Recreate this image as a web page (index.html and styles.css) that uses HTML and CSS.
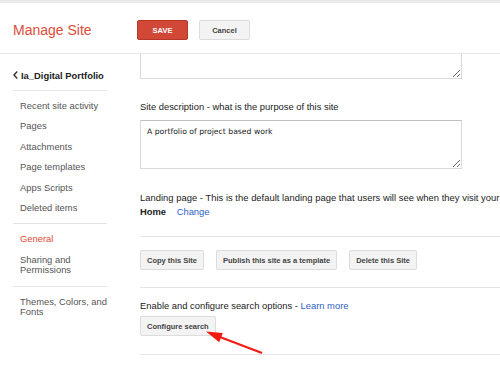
FILE: index.html
```html
<!DOCTYPE html>
<html lang="en">

<head>
    <meta charset="utf-8">
    <link rel="stylesheet" href="styles.css">
</head>

<body>
    <div class="top-strip"></div>
    <header class="header">
        <div class="page-title">Manage Site</div>
        <div class="header-actions">
            <button class="btn btn-red">SAVE</button>
            <button class="btn btn-cancel">Cancel</button>
        </div>
    </header>

    <div class="layout">
        <nav class="sidebar">
            <div class="site-name">
                <svg class="chevron" width="5" height="8" viewBox="0 0 5 8">
                    <polyline points="4.2,0.6 1,4 4.2,7.4" fill="none" stroke="#333" stroke-width="1.4" />
                </svg>
                Ia_Digital Portfolio
            </div>
            <ul class="nav-group">
                <li>Recent site activity</li>
                <li>Pages</li>
                <li>Attachments</li>
                <li>Page templates</li>
                <li>Apps Scripts</li>
                <li>Deleted items</li>
            </ul>
            <ul class="nav-group">
                <li class="active">General</li>
                <li>Sharing and<br>Permissions</li>
            </ul>
            <ul class="nav-group last">
                <li>Themes, Colors, and<br>Fonts</li>
            </ul>
        </nav>

        <main class="content">
            <section class="block">
                <textarea class="field field-cut" readonly></textarea>
                <div class="label desc-label">Site description - what is the purpose of this site</div>
                <textarea class="field field-desc" readonly>A portfolio of project based work</textarea>
                <div class="label landing-label">Landing page - This is the default landing page that users will see when they visit your site</div>
                <div class="label"><strong>Home</strong> <a class="link change-link">Change</a></div>
            </section>

            <section class="block actions">
                <button class="btn">Copy this Site</button>
                <button class="btn">Publish this site as a template</button>
                <button class="btn">Delete this Site</button>
            </section>

            <section class="block search">
                <div class="label">Enable and configure search options - <a class="link">Learn more</a></div>
                <button class="btn search-btn">Configure search</button>
            </section>
        </main>
    </div>

    <svg class="annotation" width="70" height="35" viewBox="0 0 70 35">
        <line x1="62" y1="28" x2="16" y2="10.5" stroke="#f21b12" stroke-width="2" />
        <polygon points="6,6.5 22.8,7.9 19.2,17.3" fill="#f21b12" />
    </svg>
</body>

</html>
```

FILE: styles.css
```css
body {
    margin: 0;
    font-family: "Liberation Sans", Arial, sans-serif;
    font-size: 9.4px;
    color: #222;
    background: #fff;
    overflow: hidden;
}

.top-strip {
    height: 3px;
    background: #ebebeb;
}

.header {
    display: flex;
    align-items: center;
    height: 46px;
    padding-top: 4px;
    border-bottom: 1px solid #e5e5e5;
}

.page-title {
    width: 124px;
    padding-left: 13px;
    font-size: 14px;
    color: #dd4b39;
}

.header-actions {
    display: flex;
    gap: 11px;
}

.btn {
    height: 20px;
    padding: 0 6px;
    border: 1px solid #dcdcdc;
    border-radius: 2px;
    background: #f3f3f3;
    color: #444;
    font-family: "Liberation Sans", Arial, sans-serif;
    font-size: 7.5px;
    font-weight: bold;
    cursor: pointer;
}

.btn-red {
    width: 51px;
    background: #d14836;
    border-color: #b8372a;
    color: #fff;
}

.btn-cancel {
    width: 51px;
}

.layout {
    display: flex;
}

.sidebar {
    width: 94px;
    flex-shrink: 0;
    margin: 0 33px 0 13px;
}

.site-name {
    display: flex;
    align-items: center;
    gap: 3px;
    height: 14px;
    margin-top: 14px;
    padding-bottom: 8px;
    border-bottom: 1px solid #e5e5e5;
    font-weight: bold;
    color: #222;
    white-space: nowrap;
}

.nav-group {
    list-style: none;
    margin: 0;
    padding: 5px 0;
    border-bottom: 1px solid #e5e5e5;
}

.nav-group.last {
    border-bottom: none;
}

.nav-group li {
    padding: 5px 0 5px 7px;
    line-height: 10.4px;
    color: #555;
    white-space: nowrap;
}

.nav-group li.active {
    color: #dd4b39;
}

.content {
    flex: 1;
    min-width: 0;
    overflow: hidden;
}

.block {
    border-bottom: 1px solid #e5e5e5;
    width: 420px;
}

.field {
    display: block;
    box-sizing: border-box;
    width: 322px;
    margin: 0;
    border: 1px solid #d9d9d9;
    border-top-color: #c0c0c0;
    font-family: "DejaVu Sans", Verdana, sans-serif;
    font-size: 7.7px;
    color: #222;
    resize: vertical;
    outline: none;
}

.field-cut {
    height: 25px;
    border-top: none;
}

.field-desc {
    height: 49px;
    margin-top: 6px;
    padding: 6px 6px;
    line-height: 10px;
}

.label {
    line-height: 14px;
    white-space: nowrap;
}

.desc-label {
    margin-top: 21px;
}

.landing-label {
    margin-top: 22px;
    letter-spacing: 0.03px;
}

.block:first-child {
    padding-bottom: 17px;
}

.link {
    color: #2f62c8;
}

.change-link {
    margin-left: 8px;
}

.actions {
    display: flex;
    gap: 12px;
    padding: 13px 0 17px;
}

.search {
    padding: 11px 0 18px;
}

.search-btn {
    display: block;
    margin-top: 3px;
}

.annotation {
    position: absolute;
    left: 200px;
    top: 325px;
}
```
